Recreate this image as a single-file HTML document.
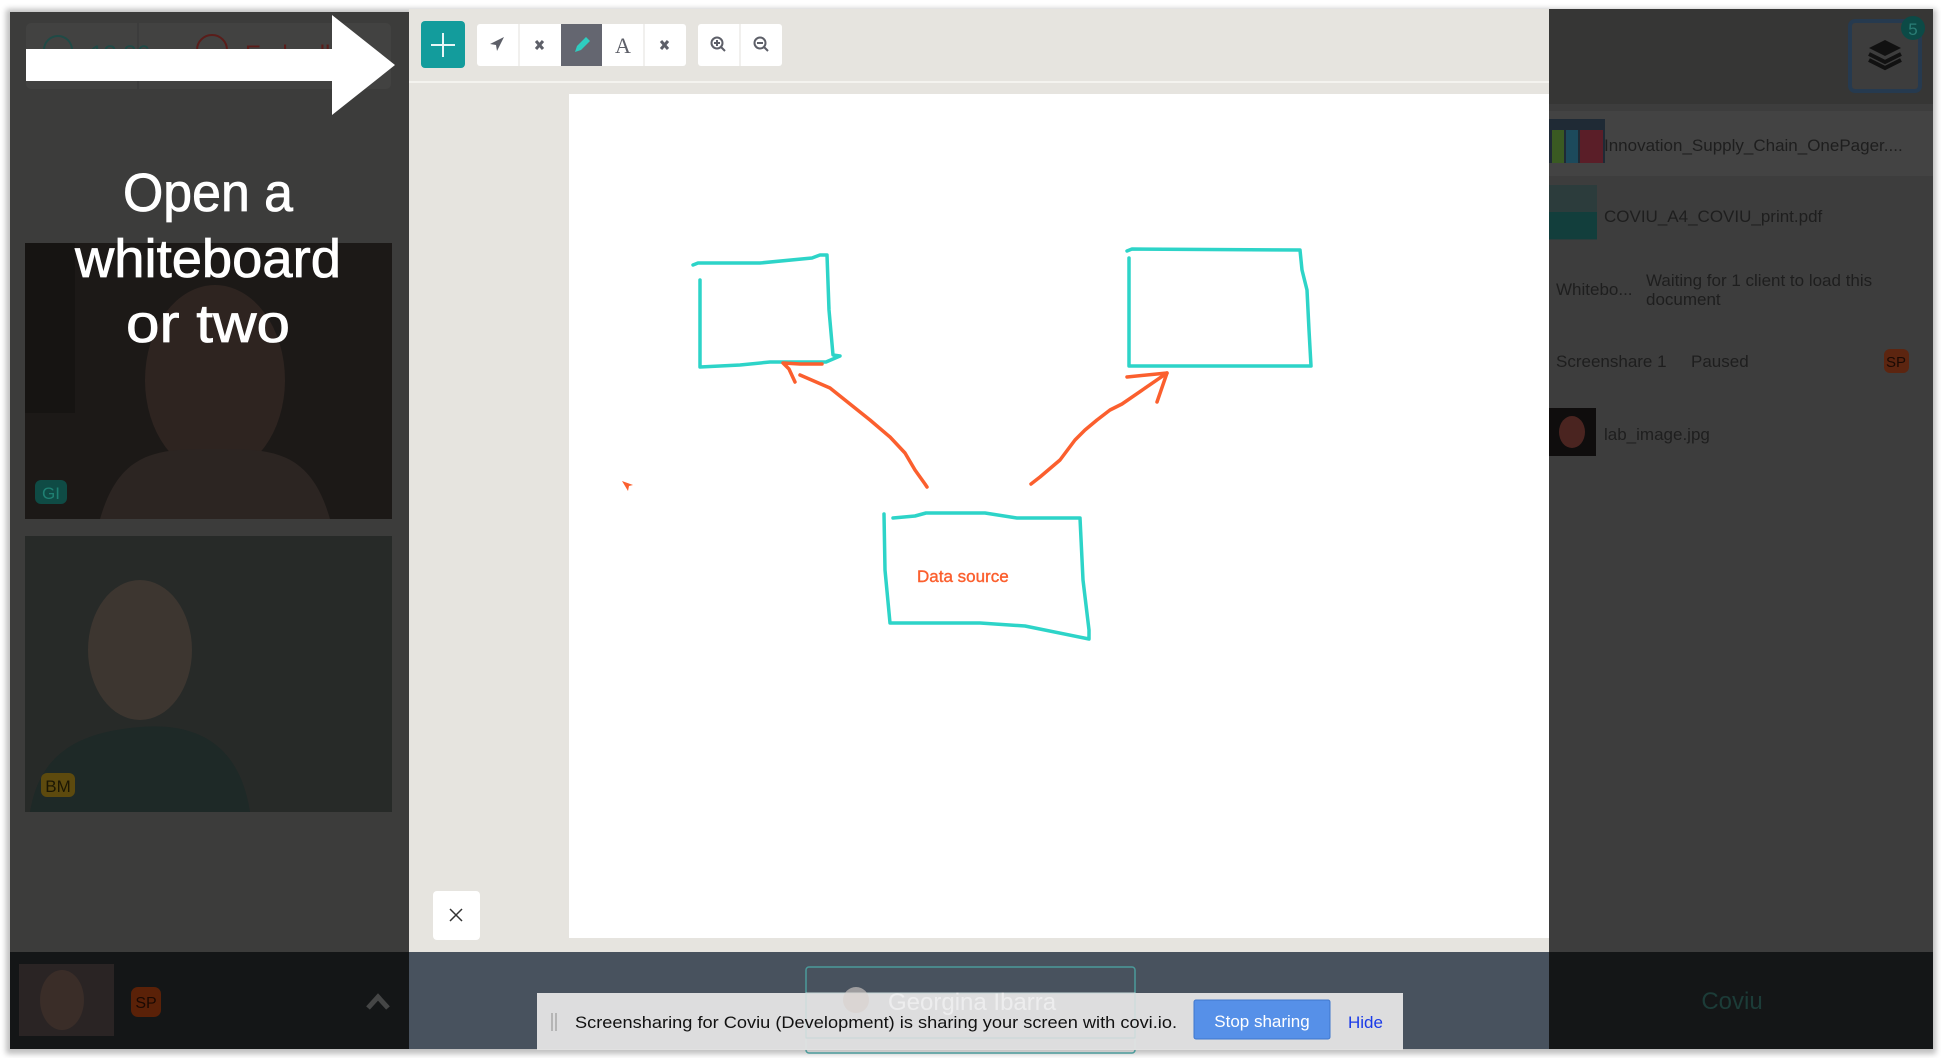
<!DOCTYPE html>
<html><head><meta charset="utf-8"><style>
html,body{margin:0;padding:0;width:1941px;height:1058px;overflow:hidden;background:#fff}
svg{display:block}
text{font-family:"Liberation Sans",sans-serif}
</style></head><body>
<svg width="1941" height="1058" viewBox="0 0 1941 1058" xmlns="http://www.w3.org/2000/svg">
<defs>
<filter id="sh" x="-5%" y="-5%" width="110%" height="110%"><feGaussianBlur stdDeviation="3"/></filter>
</defs>
<rect x="6" y="9" width="1930" height="1045" fill="#000" opacity="0.25" filter="url(#sh)"/>
<!-- middle -->
<rect x="409" y="9" width="1140" height="943" fill="#e6e4df"/>
<line x1="409" y1="82" x2="1549" y2="82" stroke="#f4f3ef" stroke-width="2"/>
<rect x="569" y="94" width="980" height="844" fill="#fff"/>
<!-- toolbar -->
<rect x="421" y="21" width="44" height="47" rx="4" fill="#139c9c"/>
<path d="M443 33v24M431 45h24" stroke="#e8f6f6" stroke-width="2"/>
<rect x="477" y="24" width="209" height="42" rx="3" fill="#fff"/>
<rect x="561" y="24" width="41" height="42" fill="#646670"/>
<path d="M519 24v42M644 24v42" stroke="#e3e1dc" stroke-width="1"/>
<path d="M504 37l-14 7 6 1 1 6z" fill="#5d5f68"/>
<path d="M536 41l7 8M543 41l-7 8" stroke="#5d5f68" stroke-width="3"/>
<path d="M661 41l7 8M668 41l-7 8" stroke="#5d5f68" stroke-width="3"/>
<path d="M575 52l2-6 9-9 4 4-9 9z" fill="#2ecdc0"/>
<text x="623" y="53" style="font-family:'Liberation Serif',serif" font-size="22" fill="#5d5f68" text-anchor="middle">A</text>
<rect x="698" y="24" width="84" height="42" rx="3" fill="#fff"/>
<path d="M740 24v42" stroke="#e3e1dc"/>
<circle cx="717" cy="43" r="5.5" fill="none" stroke="#5d5f68" stroke-width="2"/><path d="M721 47l4 4M714 43h6M717 40v6" stroke="#5d5f68" stroke-width="2"/>
<circle cx="760" cy="43" r="5.5" fill="none" stroke="#5d5f68" stroke-width="2"/><path d="M764 47l4 4M757 43h6" stroke="#5d5f68" stroke-width="2"/>
<!-- drawings -->
<g fill="none" stroke="#2dd4c8" stroke-width="3.5" stroke-linejoin="round" stroke-linecap="round">
<path d="M693 265L698 263L760 263L812 258L820 255L827 255L829 310L833 355L840 356L826 362L770 362L740 365L700 367L700 280"/>
<path d="M1127 251L1132 249L1300 250L1302 270L1307 290L1309 330L1311 366L1129 366L1129 258"/>
<path d="M884 514L885 570L890 623L980 623L1025 626L1089 639L1089 630L1083 580L1080 518L1017 518L985 513L926 513L915 516L893 518"/>
</g>
<g fill="none" stroke="#fb5f2e" stroke-width="3.5" stroke-linecap="round" stroke-linejoin="round">
<path d="M927 487L925 484L915 470L905 453L890 437L870 420L850 404L830 388L800 375"/>
<path d="M795 382L789 369L783 363L800 364L822 364"/>
<path d="M1031 484L1040 477L1060 460L1075 440L1085 430L1097 420L1110 410L1122 404L1167 373"/>
<path d="M1127 377L1167 373L1157 402"/>
</g>
<path d="M622 481l6 10 1-5 4-1z" fill="#fb5f2e"/>
<text x="917" y="582" font-size="17" fill="#fb5f2e" stroke="#fb5f2e" stroke-width="0.4">Data source</text>
<!-- close -->
<rect x="433" y="891" width="47" height="49" rx="4" fill="#fff"/>
<path d="M450 909l12 12M462 909l-12 12" stroke="#333" stroke-width="1.5"/>
<!-- left panel -->
<rect x="10" y="12" width="399" height="940" fill="#3c3c3b"/>
<rect x="26" y="23" width="365" height="66" rx="5" fill="#424241"/>
<line x1="138" y1="23" x2="138" y2="89" stroke="#373736"/>
<circle cx="58" cy="50" r="14" fill="none" stroke="#204a46" stroke-width="2"/>
<text x="90" y="62" font-size="24" fill="#204a46">12:36</text>
<circle cx="212" cy="50" r="15" fill="none" stroke="#5a1d1a" stroke-width="2"/>
<text x="245" y="62" font-size="24" fill="#5a1d1a">End call</text>
<rect x="25" y="243" width="367" height="276" fill="#1c1917"/>
<ellipse cx="215" cy="380" rx="70" ry="95" fill="#2e2420"/>
<path d="M100 519c20-70 60-70 115-70s95 0 115 70z" fill="#2c2522"/>
<rect x="25" y="243" width="50" height="170" fill="#161412"/>
<rect x="35" y="480" width="32" height="24" rx="6" fill="#0f4b45"/>
<text x="51" y="499" font-size="17" fill="#1f8073" text-anchor="middle">GI</text>
<rect x="25" y="536" width="367" height="276" fill="#272a28"/>
<ellipse cx="140" cy="650" rx="52" ry="70" fill="#3d3630"/>
<path d="M30 812c10-60 50-80 110-85s100 20 110 85z" fill="#1e2927"/>
<rect x="41" y="773" width="34" height="24" rx="6" fill="#5d4a0e"/>
<text x="58" y="792" font-size="17" fill="#1b1704" text-anchor="middle">BM</text>
<!-- arrow -->
<path d="M26 49H332V15L395 65L332 115V81H26z" fill="#fff"/>
<g fill="#fff" stroke="#fff" stroke-width="0.8" font-size="54" text-anchor="middle">
<text x="208" y="211" textLength="170" lengthAdjust="spacingAndGlyphs">Open a</text>
<text x="208" y="277" textLength="266" lengthAdjust="spacingAndGlyphs">whiteboard</text>
<text x="208" y="342" textLength="164" lengthAdjust="spacingAndGlyphs">or two</text>
</g>
<!-- right panel -->
<rect x="1549" y="9" width="384" height="943" fill="#3d3d3d"/>
<rect x="1549" y="9" width="384" height="95" fill="#363635"/>
<rect x="1850" y="21" width="70" height="70" rx="5" fill="#3d3d3d" stroke="#263a4f" stroke-width="4"/>
<path d="M1885 40l16 8-16 8-16-8z" fill="#111"/><path d="M1869 54l16 8 16-8M1869 60l16 8 16-8" stroke="#111" stroke-width="4" fill="none"/>
<circle cx="1913" cy="28" r="12" fill="#0c4a46"/>
<text x="1913" y="35" font-size="17" fill="#2a7d75" text-anchor="middle">5</text>
<rect x="1549" y="111" width="384" height="65" fill="#434343"/>
<rect x="1549" y="119" width="56" height="44" fill="#1f2a35"/><rect x="1552" y="130" width="12" height="33" fill="#3a5a22"/><rect x="1566" y="130" width="12" height="33" fill="#1c4a5c"/><rect x="1580" y="130" width="23" height="33" fill="#5a1e28"/>
<rect x="1549" y="185" width="48" height="55" fill="#2c3c3c"/><rect x="1549" y="212" width="48" height="27" fill="#123e3c"/>
<rect x="1549" y="408" width="47" height="48" fill="#0f0d0d"/><ellipse cx="1572" cy="432" rx="13" ry="16" fill="#4a2420"/>
<g font-size="17" fill="#1e1e1e">
<text x="1604" y="151">Innovation_Supply_Chain_OnePager....</text>
<text x="1604" y="222">COVIU_A4_COVIU_print.pdf</text>
<text x="1556" y="295">Whitebo...</text>
<text x="1646" y="286">Waiting for 1 client to load this</text>
<text x="1646" y="305">document</text>
<text x="1556" y="367">Screenshare 1</text>
<text x="1691" y="367">Paused</text>
<text x="1604" y="440">lab_image.jpg</text>
</g>
<rect x="1884" y="349" width="25" height="24" rx="6" fill="#5c2510"/>
<text x="1896" y="367" font-size="15" fill="#1a0a04" text-anchor="middle">SP</text>
<!-- bottom strips -->
<rect x="10" y="952" width="399" height="97" fill="#141617"/>
<rect x="409" y="952" width="1140" height="97" fill="#48525e"/>
<rect x="1549" y="952" width="384" height="97" fill="#141617"/>
<rect x="19" y="964" width="95" height="72" fill="#2a2424"/><ellipse cx="62" cy="1000" rx="22" ry="30" fill="#3a2d28"/>
<rect x="131" y="987" width="30" height="30" rx="7" fill="#5a2108"/>
<text x="146" y="1008" font-size="16" fill="#1a0903" text-anchor="middle">SP</text>
<path d="M368 1008l10-11 10 11" stroke="#454646" stroke-width="5" fill="none"/>
<text x="1732" y="1009" font-size="24" fill="#1c3c38" text-anchor="middle">Coviu</text>
<rect x="806" y="967" width="329" height="86" rx="3" fill="none" stroke="#4a9a9a" stroke-width="1.5"/>
<!-- screenshare bar -->
<rect x="537" y="993" width="866" height="57" fill="#e2e2e2" opacity="0.97"/>
<rect x="806" y="993" width="329" height="45" fill="none" stroke="#c8d8d8" stroke-width="1"/>
<circle cx="856" cy="1000" r="13" fill="#d8d0cc" opacity="0.6"/>
<text x="888" y="1010" font-size="24" fill="#f2f2f2" opacity="0.8">Georgina Ibarra</text>
<path d="M552 1013v18M556 1013v18" stroke="#b5b5b5" stroke-width="2"/>
<text x="575" y="1028" font-size="17" fill="#111" textLength="602" lengthAdjust="spacingAndGlyphs">Screensharing for Coviu (Development) is sharing your screen with covi.io.</text>
<rect x="1194" y="1000" width="136" height="39" rx="2" fill="#5690e8" stroke="#3f76cc"/>
<text x="1262" y="1027" font-size="17" fill="#fff" text-anchor="middle">Stop sharing</text>
<text x="1348" y="1028" font-size="17" fill="#1a3ae8">Hide</text>
</svg>
</body></html>
